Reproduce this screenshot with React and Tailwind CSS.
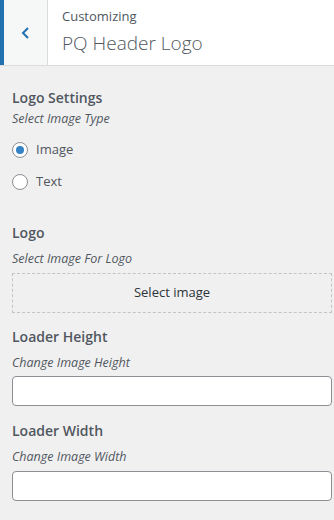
export default function App() {
  return (
    <div
      className="w-[334px] h-[520px] bg-[#f0f0f1] text-[#50575e] overflow-hidden"
      style={{ fontFamily: '"Open Sans", "Noto Sans", sans-serif' }}
    >
      <div className="flex h-[66px] bg-white border-b border-[#dcdcde]">
        <button className="w-[48px] h-full flex items-center justify-center bg-[#f6f7f7] border-l-[4px] border-[#2271b1] border-r border-r-[#dcdcde]">
          <svg width="12" height="14" viewBox="0 0 12 14" fill="none">
            <path d="M8 2 L3 7 L8 12" stroke="#2271b1" strokeWidth="2" />
          </svg>
        </button>
        <div className="pl-[14px] pt-[6px]">
          <div className="text-[13px] leading-[20px] text-[#50575e]">Customizing</div>
          <div className="text-[19px] leading-[28px] mt-[3px] font-light text-[#50575e]">PQ Header Logo</div>
        </div>
      </div>

      <div className="pl-[12px] pr-[2px] pt-[22px]">
        <div className="text-[14px] font-semibold leading-[20px]">Logo Settings</div>
        <div className="text-[12.5px] italic leading-[18px] mt-[2px]">Select Image Type</div>
        <div className="mt-[12px] flex flex-col gap-[13px]">
          <label className="flex items-center gap-[8px] text-[13px] leading-[19px]">
            <span className="w-[16px] h-[16px] rounded-full border border-[#8c8f94] bg-white flex items-center justify-center">
              <span className="w-[8px] h-[8px] rounded-full bg-[#3582c4]" />
            </span>
            Image
          </label>
          <label className="flex items-center gap-[8px] text-[13px] leading-[19px]">
            <span className="w-[16px] h-[16px] rounded-full border border-[#8c8f94] bg-white" />
            Text
          </label>
        </div>

        <div className="text-[14px] font-semibold leading-[20px] mt-[32px]">Logo</div>
        <div className="text-[12.5px] italic leading-[18px] mt-[7px]">Select Image For Logo</div>
        <div className="mt-[5px] h-[40px] border border-dashed border-[#c3c4c7] flex items-center justify-center text-[13px] text-[#2c3338]">
          Select image
        </div>

        <div className="text-[14px] font-semibold leading-[20px] mt-[14px]">Loader Height</div>
        <div className="text-[12.5px] italic leading-[18px] mt-[7px]">Change Image Height</div>
        <input className="mt-[4px] block w-full h-[30px] bg-white border border-[#8c8f94] rounded-[4px]" />

        <div className="text-[14px] font-semibold leading-[20px] mt-[15px]">Loader Width</div>
        <div className="text-[12.5px] italic leading-[18px] mt-[7px]">Change Image Width</div>
        <input className="mt-[5px] block w-full h-[30px] bg-white border border-[#8c8f94] rounded-[4px]" />
      </div>
    </div>
  );
}
